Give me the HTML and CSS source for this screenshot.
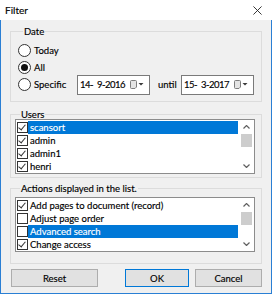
FILE: index.html
```html
<!DOCTYPE html>
<html>

<head>
  <meta charset="utf-8">
  <link rel="stylesheet" href="styles.css">
</head>

<body>
  <div class="window">
    <div class="titlebar">
      <span class="title">Filter</span>
      <svg class="close" viewBox="0 0 10 10">
        <path d="M0.5 0.5L9.5 9.5M9.5 0.5L0.5 9.5" />
      </svg>
    </div>

    <div class="client">
      <div class="group date-group">
        <div class="group-title">Date</div>
        <div class="radio-row"><span class="radio"></span><span class="radio-label">Today</span></div>
        <div class="radio-row"><span class="radio checked"></span><span class="radio-label">All</span></div>
        <div class="radio-row">
          <span class="radio"></span><span class="radio-label specific">Specific</span>
          <div class="datebox">
            <span class="date-text">14-  9-2016</span>
            <svg class="cal-icon" viewBox="0 0 14 10">
              <path class="cal" d="M0.5 1.5Q0.5 0.5 1.5 0.5H5.5Q6.5 0.5 6.5 1.5V7L5 8.5H1.5Q0.5 8.5 0.5 7.5Z" />
              <path class="arrow" d="M8.5 3H13.5L11 5.5Z" />
            </svg>
          </div>
          <span class="until">until</span>
          <div class="datebox">
            <span class="date-text">15-  3-2017</span>
            <svg class="cal-icon" viewBox="0 0 14 10">
              <path class="cal" d="M0.5 1.5Q0.5 0.5 1.5 0.5H5.5Q6.5 0.5 6.5 1.5V7L5 8.5H1.5Q0.5 8.5 0.5 7.5Z" />
              <path class="arrow" d="M8.5 3H13.5L11 5.5Z" />
            </svg>
          </div>
        </div>
      </div>

      <div class="group users-group">
        <div class="group-title">Users</div>
        <div class="listbox">
          <div class="items">
            <div class="item"><span class="check checked"></span><span class="item-text selected">scansort</span></div>
            <div class="item"><span class="check checked"></span><span class="item-text">admin</span></div>
            <div class="item"><span class="check checked"></span><span class="item-text">admin1</span></div>
            <div class="item"><span class="check checked"></span><span class="item-text">henri</span></div>
          </div>
          <div class="scrollbar">
            <svg class="sb-arrow" viewBox="0 0 7 4"><path d="M0.5 3.5L3.5 0.5L6.5 3.5" /></svg>
            <div class="sb-thumb"></div>
            <div class="sb-track"></div>
            <svg class="sb-arrow" viewBox="0 0 7 4"><path d="M0.5 0.5L3.5 3.5L6.5 0.5" /></svg>
          </div>
        </div>
      </div>

      <div class="group actions-group">
        <div class="group-title">Actions displayed in the list.</div>
        <div class="listbox">
          <div class="items">
            <div class="item"><span class="check checked"></span><span class="item-text">Add pages to document (record)</span></div>
            <div class="item"><span class="check"></span><span class="item-text">Adjust page order</span></div>
            <div class="item"><span class="check"></span><span class="item-text selected">Advanced search</span></div>
            <div class="item"><span class="check checked"></span><span class="item-text">Change access</span></div>
          </div>
          <div class="scrollbar">
            <svg class="sb-arrow" viewBox="0 0 7 4"><path d="M0.5 3.5L3.5 0.5L6.5 3.5" /></svg>
            <div class="sb-thumb"></div>
            <div class="sb-track"></div>
            <svg class="sb-arrow" viewBox="0 0 7 4"><path d="M0.5 0.5L3.5 3.5L6.5 0.5" /></svg>
          </div>
        </div>
      </div>

      <div class="buttons">
        <button class="button reset">Reset</button>
        <button class="button ok">OK</button>
        <button class="button cancel">Cancel</button>
      </div>
    </div>
  </div>
</body>

</html>
```

FILE: styles.css
```css
* {
  box-sizing: border-box;
  margin: 0;
  padding: 0;
}

body {
  width: 272px;
  height: 294px;
  font-family: Lato, "Noto Sans", sans-serif;
  font-size: 9.5px;
  color: #000;
  background: #fff;
  -webkit-text-stroke: 0.15px;
}

.window {
  width: 272px;
  height: 294px;
  display: flex;
  flex-direction: column;
}

.titlebar {
  height: 20px;
  background: #fff;
  display: flex;
  align-items: center;
  justify-content: space-between;
  padding: 0 10px 0 5px;
}

.title {
  font-size: 10px;
}

.close {
  width: 9px;
  height: 9px;
  fill: none;
  stroke: #222;
  stroke-width: 1;
}

.client {
  flex: 1;
  background: #f0f0f0;
  border: 1px solid #2a7fd4;
  border-top: none;
  padding: 11px 9px 0;
  display: flex;
  flex-direction: column;
}

/* group boxes */

.group {
  border: 1px solid #dcdcdc;
}

.group-title {
  background: #f0f0f0;
  line-height: 14px;
  height: 14px;
  padding: 0 1px;
  margin: -7px 0 0 5px;
  width: max-content;
}

.date-group {
  padding: 0 0 8px 7px;
}

.date-group .group-title {
  margin-bottom: 3px;
}

.users-group {
  margin-top: 12px;
  padding: 0 6px 3px 4px;
}

.users-group .group-title {
  margin-bottom: -3px;
}

.actions-group {
  margin-top: 10px;
  padding: 0 6px 11px 4px;
}

.actions-group .group-title {
  margin-bottom: 1px;
}

/* radios */

.radio-row {
  height: 17px;
  display: flex;
  align-items: center;
}

.radio {
  width: 13px;
  height: 13px;
  border: 1px solid #333;
  border-radius: 50%;
  background: #fff;
  display: flex;
  align-items: center;
  justify-content: center;
  flex-shrink: 0;
}

.radio.checked::after {
  content: '';
  width: 7px;
  height: 7px;
  border-radius: 50%;
  background: #111;
}

.radio-label {
  margin-left: 3px;
}

.radio-label.specific {
  width: 43px;
}

.datebox {
  width: 73px;
  height: 20px;
  flex-shrink: 0;
  background: #fff;
  border: 1px solid #7a7a7a;
  display: flex;
  align-items: center;
  justify-content: space-between;
  padding: 0 5px 0 2px;
}

.date-text {
  white-space: pre;
  letter-spacing: -0.5px;
}

.cal-icon {
  width: 14px;
  height: 10px;
  flex-shrink: 0;
}

.cal-icon .cal {
  fill: #e4e4e4;
  stroke: #7d7d7d;
  stroke-width: 1;
}

.cal-icon .arrow {
  fill: #3a3a3a;
}

.until {
  width: 23px;
  margin-left: 8px;
  flex-shrink: 0;
}

/* list boxes */

.listbox {
  height: 55px;
  background: #fff;
  border: 1px solid #8c8c8c;
  display: flex;
}

.items {
  flex: 1;
  padding-top: 1px;
}

.item {
  height: 13px;
  display: flex;
  align-items: center;
}

.check {
  width: 11px;
  height: 11px;
  margin-left: 1px;
  border: 1px solid #333;
  background: #fff;
  flex-shrink: 0;
  position: relative;
}

.check.checked::after {
  content: '';
  position: absolute;
  left: 2px;
  top: 0px;
  width: 3px;
  height: 6px;
  border: solid #333;
  border-width: 0 1px 1px 0;
  transform: rotate(40deg);
}

.item-text {
  flex: 1;
  height: 13px;
  line-height: 13px;
  padding-left: 2px;
  white-space: nowrap;
  overflow: hidden;
}

.item-text.selected {
  background: #0078d7;
  color: #fff;
}

.scrollbar {
  width: 15px;
  margin-left: 1px;
  display: flex;
  flex-direction: column;
  align-items: center;
}

.sb-arrow {
  width: 7px;
  height: 4px;
  margin: 5px 0;
  fill: none;
  stroke: #606060;
  stroke-width: 1.2;
}

.sb-thumb {
  width: 11px;
  height: 13px;
  background: #cdcdcd;
}

.sb-track {
  flex: 1;
}

/* buttons */

.buttons {
  display: flex;
  margin-top: 5px;
  padding-left: 1px;
}

.button {
  height: 18px;
  font-family: inherit;
  font-size: 9.5px;
  color: #000;
  background: #e1e1e1;
  border: 1px solid #adadad;
  -webkit-text-stroke: 0.15px;
}

.button.reset {
  width: 87px;
}

.button.ok {
  width: 64px;
  margin-left: auto;
  border-color: #0078d7;
}

.button.cancel {
  width: 67px;
  margin-left: 6px;
}
```
